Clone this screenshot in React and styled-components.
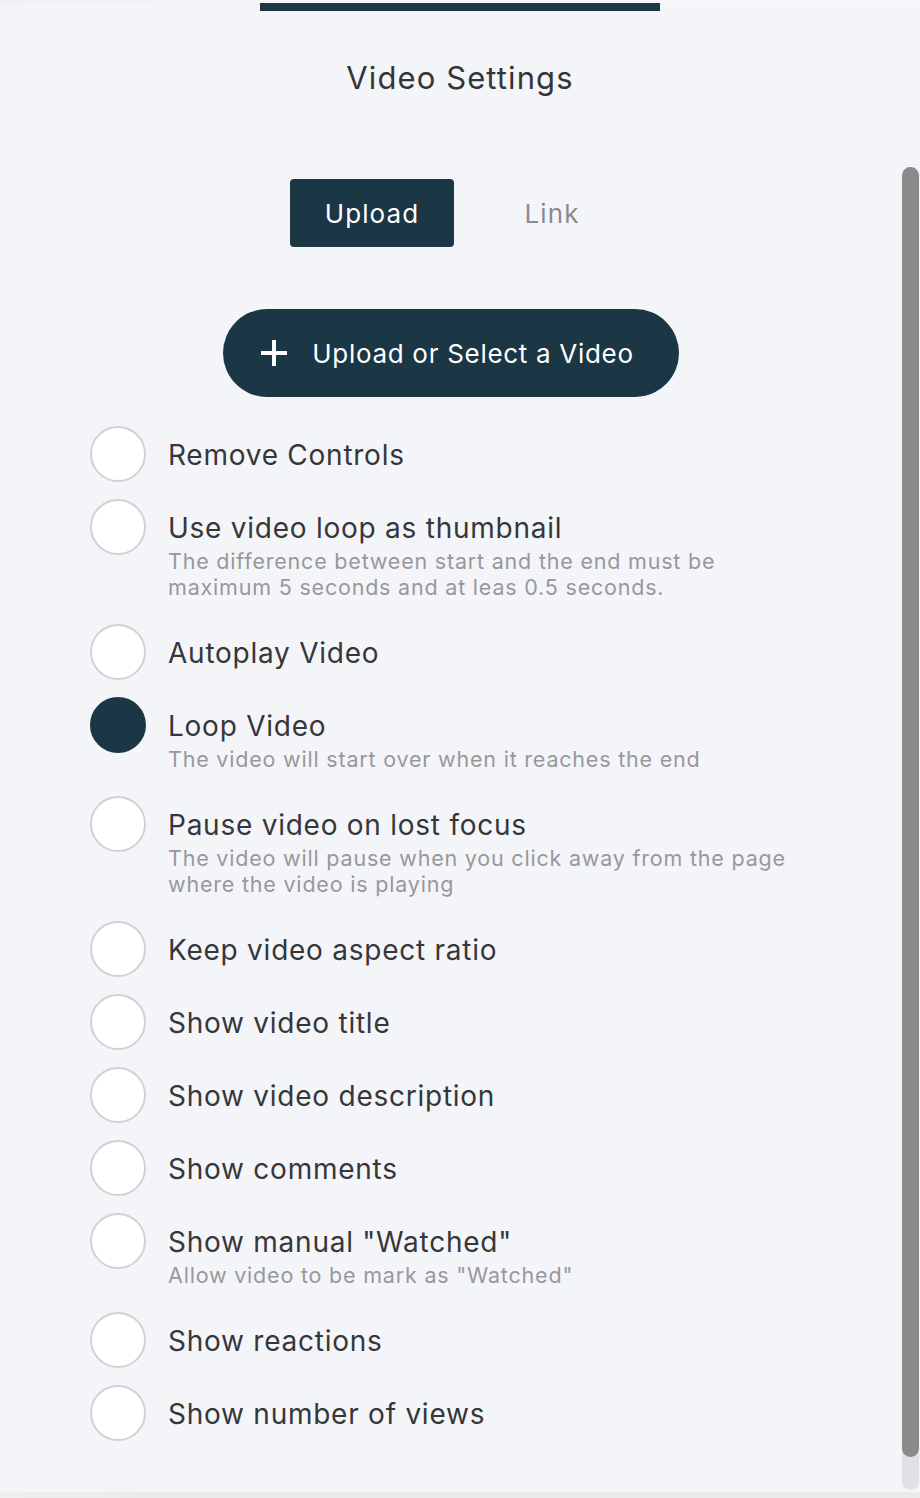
import React from 'react';
import styled, { createGlobalStyle } from 'styled-components';

const GlobalStyle = createGlobalStyle`
  html, body {
    margin: 0;
    padding: 0;
    background: #f4f5f9;
    font-family: Inter, "Liberation Sans", Arial, sans-serif;
  }
  * {
    box-sizing: border-box;
  }
`;

const Page = styled.div`
  width: 920px;
  height: 1498px;
  display: flex;
  flex-direction: column;
  background: #f4f5f9;
  overflow: hidden;
`;

const TopFade = styled.div`
  height: 3px;
  background: linear-gradient(90deg, #efeff1 0%, #f6f6f8 30%, #f6f6f8 100%);
`;

const Handle = styled.div`
  width: 400px;
  height: 8px;
  margin: 0 auto;
  background: #1b3644;
`;

const Title = styled.h1`
  margin: 0;
  padding-top: 47px;
  height: 118px;
  text-align: center;
  font-size: 31px;
  font-weight: 400;
  letter-spacing: 1.1px;
  line-height: 40px;
  color: #333538;
`;

const Body = styled.div`
  flex: 1;
  display: flex;
  min-height: 0;
`;

const Content = styled.div`
  flex: 1;
  display: flex;
  flex-direction: column;
  padding-top: 50px;
`;

const Tabs = styled.div`
  display: flex;
  justify-content: center;
  gap: 16px;
  padding-left: 22px;
  margin-bottom: 62px;
`;

const Tab = styled.button`
  width: 164px;
  height: 68px;
  border: none;
  border-radius: 4px;
  background: ${p => (p.$active ? '#1b3644' : 'transparent')};
  color: ${p => (p.$active ? '#ffffff' : '#898a93')};
  font-family: Inter, "Liberation Sans", Arial, sans-serif;
  font-size: 26px;
  font-weight: 400;
  letter-spacing: 1.1px;
  cursor: pointer;
`;

const BigButtonWrap = styled.div`
  display: flex;
  justify-content: center;
  margin-bottom: 29px;
`;

const BigButton = styled.button`
  width: 456px;
  height: 88px;
  border: none;
  border-radius: 44px;
  background: #1b3644;
  color: #ffffff;
  display: flex;
  align-items: center;
  justify-content: center;
  gap: 24px;
  padding-right: 14px;
  font-family: Inter, "Liberation Sans", Arial, sans-serif;
  font-size: 26px;
  font-weight: 400;
  letter-spacing: 0.7px;
  cursor: pointer;
`;

const Options = styled.div`
  display: flex;
  flex-direction: column;
  gap: 17px;
  padding-left: 90px;
`;

const Row = styled.div`
  display: flex;
  align-items: flex-start;
  gap: 22px;
`;

const Radio = styled.div`
  flex: none;
  width: 56px;
  height: 56px;
  border-radius: 50%;
  background: ${p => (p.$checked ? '#1b3644' : '#ffffff')};
  border: 2px solid ${p => (p.$checked ? '#1b3644' : '#d2d2d4')};
`;

const TextBlock = styled.div`
  padding-top: 9px;
  padding-bottom: ${p => (p.$hasDesc ? '7px' : '0')};
  display: flex;
  flex-direction: column;
`;

const Label = styled.div`
  font-size: 28px;
  line-height: 40px;
  letter-spacing: 0.75px;
  color: #363739;
`;

const Desc = styled.div`
  font-size: 21.5px;
  line-height: 26px;
  letter-spacing: 0.8px;
  color: #98989b;
  max-width: 640px;
`;

const ScrollTrack = styled.div`
  width: 17px;
  margin-right: 1px;
  margin-top: 38px;
  margin-bottom: 2px;
  border-radius: 9px;
  background: #e1e1e3;
  display: flex;
  flex-direction: column;
`;

const ScrollThumb = styled.div`
  height: 1290px;
  border-radius: 9px;
  background: #8a8a8a;
`;

const BottomStrip = styled.div`
  height: 6px;
  background: linear-gradient(90deg, #efefef 0%, #eaeaea 20%, #eaeaea 100%);
`;

const PlusIcon = () => (
  <svg width="28" height="28" viewBox="0 0 28 28">
    <path d="M14 1v26M1 14h26" stroke="#ffffff" strokeWidth="4" />
  </svg>
);

const options = [
  { label: 'Remove Controls' },
  {
    label: 'Use video loop as thumbnail',
    desc: 'The difference between start and the end must be maximum 5 seconds and at leas 0.5 seconds.',
  },
  { label: 'Autoplay Video' },
  { label: 'Loop Video', desc: 'The video will start over when it reaches the end', checked: true },
  {
    label: 'Pause video on lost focus',
    desc: 'The video will pause when you click away from the page where the video is playing',
  },
  { label: 'Keep video aspect ratio' },
  { label: 'Show video title' },
  { label: 'Show video description' },
  { label: 'Show comments' },
  { label: 'Show manual "Watched"', desc: 'Allow video to be mark as "Watched"' },
  { label: 'Show reactions' },
  { label: 'Show number of views' },
];

export default function App() {
  return (
    <Page>
      <GlobalStyle />
      <TopFade />
      <Handle />
      <Title>Video Settings</Title>
      <Body>
        <Content>
          <Tabs>
            <Tab $active>Upload</Tab>
            <Tab>Link</Tab>
          </Tabs>
          <BigButtonWrap>
            <BigButton>
              <PlusIcon />
              Upload or Select a Video
            </BigButton>
          </BigButtonWrap>
          <Options>
            {options.map((opt, i) => (
              <Row key={i}>
                <Radio $checked={opt.checked} />
                <TextBlock $hasDesc={!!opt.desc}>
                  <Label>{opt.label}</Label>
                  {opt.desc && <Desc>{opt.desc}</Desc>}
                </TextBlock>
              </Row>
            ))}
          </Options>
        </Content>
        <ScrollTrack>
          <ScrollThumb />
        </ScrollTrack>
      </Body>
      <BottomStrip />
    </Page>
  );
}
